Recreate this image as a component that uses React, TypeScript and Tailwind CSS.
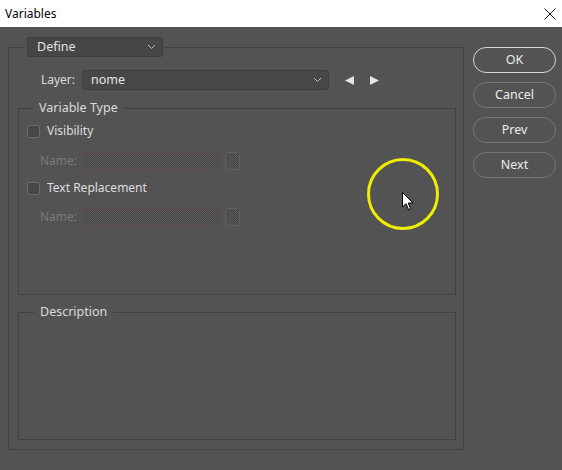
import React from 'react'

const font = { fontFamily: '"Noto Sans", "Open Sans", sans-serif' }

function Chevron() {
  return (
    <svg width="9" height="6" viewBox="0 0 9 6" className="shrink-0">
      <path d="M1 1 L4.5 4.5 L8 1" fill="none" stroke="#bdbdbd" strokeWidth="1" />
    </svg>
  )
}

function Checkbox() {
  return <span className="w-[13px] h-[13px] shrink-0 rounded-[2px] border border-[#6c6c6c] bg-[#474747]" />
}

function DisabledName({ top }: { top: string }) {
  return (
    <div className={'flex items-center h-[18px] ' + top}>
      <span className="w-[50px] shrink-0 text-right text-[12px] text-[#7b7b7b]">Name:</span>
      <span className="ml-[5px] w-[138px] shrink-0 h-[18px] border border-[#5e4e4e] bg-[repeating-conic-gradient(#464646_0_25%,#5a5a5a_0_50%)] bg-[length:2px_2px]" />
      <span className="ml-[5px] w-[15px] shrink-0 h-[18px] rounded-[3px] border border-[#606060] bg-[repeating-conic-gradient(#484848_0_25%,#585858_0_50%)] bg-[length:2px_2px]" />
    </div>
  )
}

function Btn({ label, primary }: { label: string; primary?: boolean }) {
  return (
    <button
      className={
        'w-[83px] h-[26px] rounded-full text-[12.5px] text-[#ececec] flex items-center justify-center ' +
        (primary ? 'border-[1.5px] border-[#d6d6d6]' : 'border border-[#767676]')
      }
    >
      {label}
    </button>
  )
}

export default function App() {
  return (
    <div className="w-[562px] h-[470px] overflow-hidden bg-[#535353] relative" style={font}>
      {/* title bar */}
      <div className="h-[27px] bg-white flex items-center justify-between pl-[5px] pr-[6px]">
        <span className="text-[12px] text-black">Variables</span>
        <svg width="12" height="12" viewBox="0 0 12 12">
          <path d="M0.5 0.5 L11.5 11.5 M11.5 0.5 L0.5 11.5" stroke="#111" strokeWidth="1" />
        </svg>
      </div>

      <div className="flex pt-[10px] pl-[8px]">
        {/* main group */}
        <fieldset className="w-[456px] h-[413px] border border-[#414141] pl-[9px] pr-[7px] pb-[9px] flex flex-col">
          <legend className="ml-[7px] px-[2px]">
            <div className="w-[136px] h-[20px] rounded-[3px] border border-[#3d3d3d] bg-[#464646] flex items-center justify-between pl-[9px] pr-[6px]">
              <span className="text-[12.5px] text-[#e2e2e2]">Define</span>
              <Chevron />
            </div>
          </legend>

          {/* layer row */}
          <div className="flex items-center mt-[13px] h-[20px]">
            <span className="w-[57px] text-right text-[12px] text-[#dcdcdc]">Layer:</span>
            <div className="ml-[7px] w-[247px] h-[20px] rounded-[2px] border border-[#3e3e3e] bg-[#474747] flex items-center justify-between pl-[8px] pr-[6px]">
              <span className="text-[12.5px] text-[#e6e6e6]">nome</span>
              <Chevron />
            </div>
            <svg width="9" height="9" viewBox="0 0 9 9" className="ml-[16px]">
              <path d="M0 4.5 L9 0 L9 9 Z" fill="#e4e4e4" />
            </svg>
            <svg width="9" height="9" viewBox="0 0 9 9" className="ml-[16px]">
              <path d="M9 4.5 L0 0 L0 9 Z" fill="#e4e4e4" />
            </svg>
          </div>

          {/* variable type */}
          <fieldset className="mt-[10px] h-[195px] border border-[#414141] pl-[8px]">
            <legend className="ml-[6px] px-[6px] text-[12.5px] text-[#dcdcdc] leading-[16px]">Variable Type</legend>
            <div className="flex items-center h-[16px] mt-[7px] gap-[7px]">
              <Checkbox />
              <span className="text-[12px] text-[#dedede]">Visibility</span>
            </div>
            <DisabledName top="mt-[13px]" />
            <div className="flex items-center h-[16px] mt-[10px] gap-[7px]">
              <Checkbox />
              <span className="text-[12px] text-[#dedede]">Text Replacement</span>
            </div>
            <DisabledName top="mt-[12px]" />
          </fieldset>

          {/* description */}
          <fieldset className="mt-[9px] flex-1 border border-[#414141]">
            <legend className="ml-[15px] px-[6px] text-[12.5px] text-[#dcdcdc] leading-[16px]">Description</legend>
          </fieldset>
        </fieldset>

        {/* buttons */}
        <div className="ml-[9px] mt-[10px] flex flex-col gap-[9px]">
          <Btn label="OK" primary />
          <Btn label="Cancel" />
          <Btn label="Prev" />
          <Btn label="Next" />
        </div>
      </div>

      {/* cursor highlight overlay */}
      <div className="absolute left-[367px] top-[158px] w-[72px] h-[72px] rounded-full border-[3px] border-[#eeee00]" />
      <svg className="absolute left-[402px] top-[192px]" width="12" height="19" viewBox="0 0 12 19">
        <path d="M0.5 0.5 L0.5 15 L4 11.7 L6.5 17.5 L8.6 16.6 L6.2 11 L11 11 Z" fill="#fff" stroke="#000" strokeWidth="1" />
      </svg>
    </div>
  )
}
